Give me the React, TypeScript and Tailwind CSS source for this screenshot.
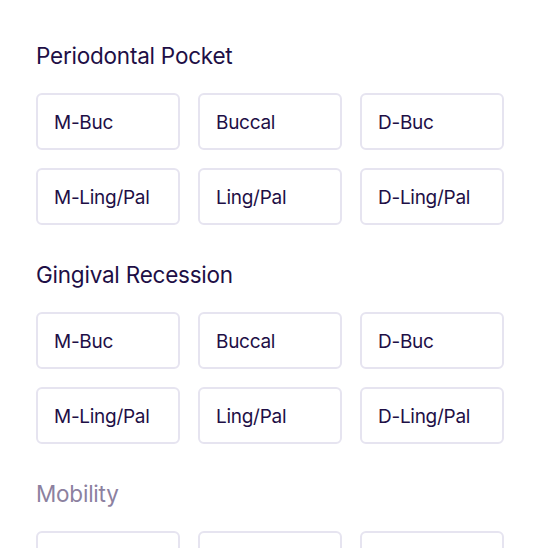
const fields = ["M-Buc", "Buccal", "D-Buc", "M-Ling/Pal", "Ling/Pal", "D-Ling/Pal"];

function Section({ title, muted }: { title: string; muted?: boolean }) {
  return (
    <section className="mb-9">
      <h2
        className={`h-[28px] text-[22.5px] font-normal leading-[28px] tracking-[-0.01em] ${
          muted ? "text-[#8c819f]" : "text-[#1e0f46]"
        }`}
      >
        {title}
      </h2>
      <div className="mt-[23px] grid grid-cols-3 gap-[18px]">
        {fields.map((f) => (
          <div
            key={f}
            className="flex h-[57px] items-center rounded-md border-2 border-[#e6e4f0] bg-white px-[16px] pt-[3px] text-[19px] font-normal tracking-[-0.015em] text-[#1e0f46]"
          >
            {f}
          </div>
        ))}
      </div>
    </section>
  );
}

export default function App() {
  return (
    <div className="h-[548px] overflow-hidden bg-white px-9 pt-[42px]" style={{ fontFamily: "Inter, 'Noto Sans', sans-serif" }}>
      <Section title="Periodontal Pocket" />
      <Section title="Gingival Recession" />
      <Section title="Mobility" muted />
    </div>
  );
}
